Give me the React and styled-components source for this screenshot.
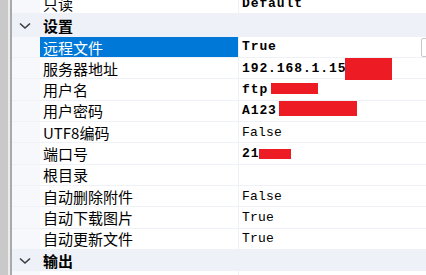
import React from "react";
import styled, { createGlobalStyle } from "styled-components";

const GlobalStyle = createGlobalStyle`
  html, body {
    margin: 0;
    padding: 0;
    background: #ffffff;
    overflow: hidden;
  }
`;

const Frame = styled.div`
  display: flex;
  width: 426px;
  height: 275px;
  overflow: hidden;
  background: #ffffff;
`;

const SideBar = styled.div`
  width: 8px;
  flex: none;
  background: #c9c9c9;
  border-right: 2px solid #ececec;
`;

const SideLine = styled.div`
  width: 2px;
  flex: none;
  background: #a9a9a9;
`;

const Grid = styled.div`
  flex: 1;
  display: flex;
  flex-direction: column;
  margin-top: -7px;
  font-family: "Noto Sans CJK SC", "Noto Sans", sans-serif;
`;

const Row = styled.div`
  display: flex;
  height: 21.33px;
  flex: none;
  box-sizing: border-box;
  border-bottom: 1px solid #eef1f6;
`;

const Gutter = styled.div`
  width: 28px;
  flex: none;
  background: #f6f8fb;
`;

const Name = styled.div`
  width: 198px;
  flex: none;
  display: flex;
  align-items: center;
  padding-left: 3px;
  box-sizing: border-box;
  font-size: 15px;
  color: ${(p) => (p.$selected ? "#ffffff" : "#000000")};
  background: ${(p) => (p.$selected ? "#0078d7" : "#ffffff")};
  white-space: nowrap;
  overflow: hidden;
`;

const Value = styled.div`
  flex: 1;
  position: relative;
  display: flex;
  align-items: center;
  padding-left: 3px;
  border-left: 1px solid #eef1f6;
  font-family: "Liberation Mono", "DejaVu Sans Mono", monospace;
  font-size: 13px;
  font-weight: ${(p) => (p.$bold ? 700 : 400)};
  letter-spacing: ${(p) => (p.$bold ? "0.9px" : "0.2px")};
  color: #000000;
  white-space: nowrap;
`;

const Redact = styled.span`
  position: absolute;
  background: #ed1c24;
`;

const DropBox = styled.span`
  position: absolute;
  top: 1px;
  right: -8px;
  width: 11px;
  height: 17px;
  border: 1px solid #c8c8c8;
  border-radius: 2px;
  background: #ffffff;
`;

const CategoryRow = styled.div`
  display: flex;
  align-items: center;
  height: ${(p) => p.$h || "21.33px"};
  flex: none;
  box-sizing: border-box;
  background: #eef2f8;
`;

const Chevron = styled.div`
  width: 28px;
  flex: none;
  display: flex;
  justify-content: center;
  padding-right: 2px;
  box-sizing: border-box;
`;

const CategoryTitle = styled.div`
  padding-left: 3px;
  font-size: 15px;
  font-weight: 700;
  color: #000000;
`;

const ChevronIcon = () => (
  <svg width="12" height="8" viewBox="0 0 12 8">
    <path d="M1 1.5 L6 6 L11 1.5" fill="none" stroke="#3c3c3c" strokeWidth="1.6" />
  </svg>
);

const settings = [
  { name: "远程文件", value: "True", bold: true, selected: true },
  { name: "服务器地址", value: "192.168.1.15", bold: true, redact: { left: 106, top: 0, width: 47, height: 22 } },
  { name: "用户名", value: "ftp", bold: true, redact: { left: 32, top: 4, width: 47, height: 11 } },
  { name: "用户密码", value: "A123", bold: true, redact: { left: 40, top: 0, width: 78, height: 15 } },
  { name: "UTF8编码", value: "False" },
  { name: "端口号", value: "21", bold: true, redact: { left: 20, top: 6, width: 32, height: 10 } },
  { name: "根目录", value: "" },
  { name: "自动删除附件", value: "False" },
  { name: "自动下载图片", value: "True" },
  { name: "自动更新文件", value: "True" },
];

export default function App() {
  return (
    <>
      <GlobalStyle />
      <Frame>
        <SideBar />
        <SideLine />
        <Grid>
          <Row>
            <Gutter />
            <Name>只读</Name>
            <Value $bold>Default</Value>
          </Row>
          <CategoryRow $h="22.5px">
            <Chevron>
              <ChevronIcon />
            </Chevron>
            <CategoryTitle>设置</CategoryTitle>
          </CategoryRow>
          {settings.map((s) => (
            <Row key={s.name}>
              <Gutter />
              <Name $selected={s.selected}>{s.name}</Name>
              <Value $bold={s.bold}>
                {s.value}
                {s.redact && (
                  <Redact
                    style={{
                      left: s.redact.left,
                      top: s.redact.top,
                      width: s.redact.width,
                      height: s.redact.height,
                    }}
                  />
                )}
                {s.selected && <DropBox />}
              </Value>
            </Row>
          ))}
          <CategoryRow>
            <Chevron>
              <ChevronIcon />
            </Chevron>
            <CategoryTitle>输出</CategoryTitle>
          </CategoryRow>
          <Row>
            <Gutter />
            <Name>自动打印</Name>
            <Value />
          </Row>
        </Grid>
      </Frame>
    </>
  );
}
